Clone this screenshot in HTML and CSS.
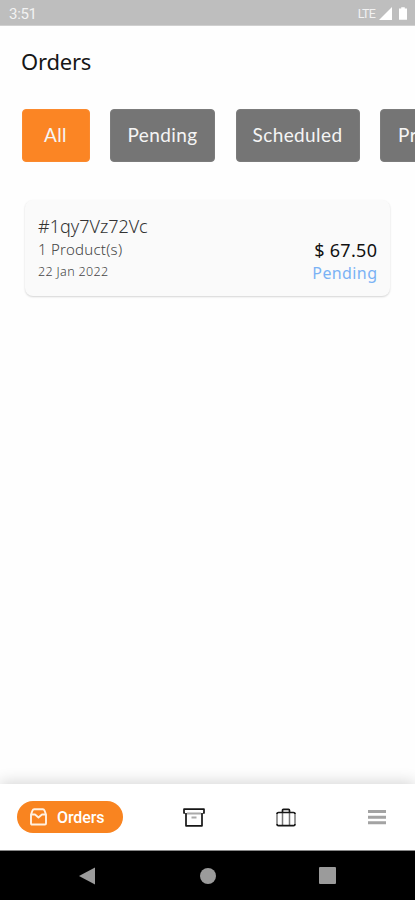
FILE: index.html
```html
<!DOCTYPE html>
<html lang="en">
<head>
<meta charset="utf-8">
<title>Orders</title>
<link rel="stylesheet" href="styles.css">
</head>
<body>
<div class="screen">
  <header class="status">
    <span class="time">3:51</span>
    <span class="network">LTE</span>
    <svg class="signal" width="13" height="13" viewBox="0 0 13 13"><path d="M13 0v13H0z"/></svg>
    <svg class="battery" width="8" height="13" viewBox="0 0 9 14"><path d="M2.500 0h4v1.500H9V14H0V1.500h2.500z"/></svg>
  </header>
  <main class="content">
    <h1 class="title">Orders</h1>
    <div class="filters">
      <button class="chip chip-all active">All</button>
      <button class="chip chip-pending">Pending</button>
      <button class="chip chip-scheduled">Scheduled</button>
      <button class="chip chip-processing">Processing</button>
    </div>
    <article class="card">
      <div class="details">
        <span class="order-id">#1qy7Vz72Vc</span>
        <span class="products">1 Product(s)</span>
        <span class="date">22 Jan 2022</span>
      </div>
      <div class="summary">
        <span class="price">$ 67.50</span>
        <span class="state">Pending</span>
      </div>
    </article>
  </main>
  <nav class="tabs">
    <a class="tab-active">
      <svg width="17" height="18" viewBox="0 0 17 18" fill="none" stroke="#fff1e2" stroke-width="1.900" stroke-linejoin="round" stroke-linecap="round"><path d="M1 6.500 2.500 2.500Q3 1.200 4.200 1.200h8.600q1.200 0 1.700 1.300L16 6.500V15.500q0 1-1 1H2q-1 0-1-1zM1.500 6.500h3.500l3.500 3 3.500-3h3.500"/></svg>
      <span>Orders</span>
    </a>
    <svg class="archive" width="22" height="19" viewBox="0 0 22 19" fill="none" stroke="#161616" stroke-width="1.700" stroke-linejoin="round"><path d="M3 5v12.800h16V5"/><path d="M4 5.500h14M8.500 9.500h5" stroke="#aaa" stroke-width="2"/><path d="M2 5H1V1.200h20V5h-1"/></svg>
    <svg class="case" width="20" height="19" viewBox="0 0 20 19" fill="none" stroke-linejoin="round"><path d="M6.500 4v13.500M13.500 4v13.500M1 5v11.500M19 5v11.500" stroke="#777" stroke-width="1.500"/><path d="M1 6Q1 4.500 2.500 4.500h15Q19 4.500 19 6M1 16q0 1.700 1.500 1.700h15Q19 17.700 19 16M6.500 4V2.600Q6.500 1.300 7.500 1.300h5q1 0 1 1.300V4" stroke="#161616" stroke-width="1.700"/></svg>
    <svg class="menu" width="18" height="15" viewBox="0 0 18 15" fill="#a3a3a3"><path d="M0 0h18v3H0zM0 5.700h18v3H0zM0 11.200h18v3H0z"/></svg>
  </nav>
  <footer class="system">
    <svg class="back" width="16" height="18" viewBox="0 0 16 18"><path d="M16 .5v17L0 9z"/></svg>
    <svg class="home" width="16" height="16" viewBox="0 0 16 16"><circle cx="8" cy="8" r="8"/></svg>
    <svg class="recent" width="17" height="17" viewBox="0 0 17 17"><rect width="17" height="17" rx="1"/></svg>
  </footer>
</div>
</body>
</html>
```
FILE: styles.css
```css
* { box-sizing: border-box; }
body { margin: 0; background: #fff; font-family: "Noto Sans", sans-serif; }
svg { display: block; flex: none; }
.screen { width: 415px; height: 900px; display: flex; flex-direction: column; overflow: hidden; background: #fefefe; }
.status { height: 26px; flex: none; display: flex; align-items: center; padding: 2px 8px 0 9px; background: #bebebe; border-bottom: 1px solid #d0d0d0; color: #f2f2f2; font-family: Roboto, sans-serif; }
.status svg { fill: #fff; }
.time { flex: 1; font-size: 15px; letter-spacing: -.3px; }
.network { font-size: 12.500px; letter-spacing: -.8px; }
.signal { margin-left: 4px; }
.battery { margin-left: 7px; }
.content { flex: 1; min-height: 0; }
.title { margin: 19px 0 0 21px; height: 32px; line-height: 32px; font-size: 22px; font-weight: 400; letter-spacing: -.2px; color: #161616; }
.filters { display: flex; width: 415px; margin-top: 32px; padding-left: 21.500px; gap: 20.500px; overflow: hidden; }
.chip { flex: none; height: 53px; padding: 0 0 2px; border: 1px solid #7c7c7c; border-radius: 4px; background: #757575; color: #f5f5f5; font: 400 19px Lato, sans-serif; letter-spacing: .4px; }
.chip.active { background: #fb8524; border-color: #fb8a2e; }
.chip-all { width: 68px; }
.chip-pending { width: 105px; }
.chip-scheduled { width: 124px; }
.chip-processing { width: 125px; padding-left: 17px; text-align: left; }
.card { display: flex; justify-content: space-between; width: 365px; height: 96px; margin: 38px 0 0 25px; padding: 13px 13px 0; border-radius: 8px; background: #fafafa; box-shadow: 0 1px 2px rgba(0,0,0,.17); }
.details, .summary { display: flex; flex-direction: column; }
.details { font-weight: 300; }
.order-id { height: 25px; line-height: 26px; font-size: 18px; color: #333; }
.products { height: 23px; line-height: 23px; font-size: 15px; letter-spacing: .25px; color: #444; }
.date { height: 22px; line-height: 22px; font-size: 12.500px; letter-spacing: .35px; color: #444; }
.summary { align-items: flex-end; padding-top: 25px; }
.price { height: 24px; line-height: 24px; font-size: 18px; letter-spacing: .3px; margin-right: -.3px; color: #111; }
.state { height: 23px; line-height: 23px; font-size: 16px; letter-spacing: .4px; margin-right: -.4px; color: #7ab2f5; }
.tabs { display: flex; align-items: center; height: 67px; flex: none; padding: 0 29px 0 17px; background: #fff; box-shadow: 0 -2px 14px rgba(0,0,0,.16); border-bottom: 1px solid #888; }
.tab-active { display: flex; align-items: center; gap: 10px; width: 106px; height: 32px; padding-left: 13px; border-radius: 16px; background: #f98420; color: #fff; font: 500 16px Roboto, sans-serif; letter-spacing: -.1px; }
.archive { margin-left: 60px; }
.case { margin-left: 71px; }
.menu { margin-left: auto; }
.system { display: flex; align-items: center; height: 49px; flex: none; background: #000; }
.system svg { fill: #9b9b9b; }
.back { margin-left: 79px; }
.home { margin-left: 105px; }
.recent { margin-left: 103px; }
```
